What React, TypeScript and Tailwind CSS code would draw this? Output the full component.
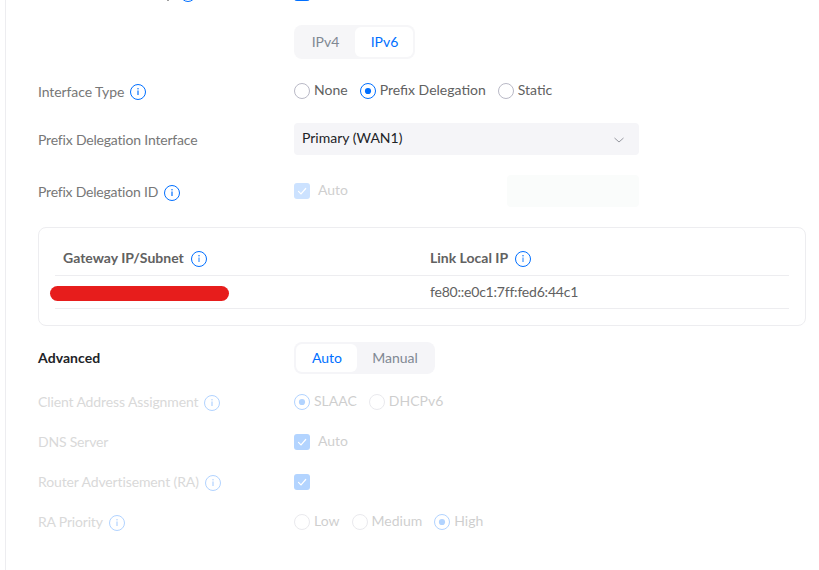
import type { ReactNode } from "react";

function Info({ faded = false, thin = false }: { faded?: boolean; thin?: boolean }) {
  return (
    <svg viewBox="0 0 16 16" fill="none" className={`size-4 shrink-0 ${faded ? "opacity-30" : ""}`}>
      <circle cx="8" cy="8" r="7.5" stroke="#006fff" />
      <path d="M8 6.5V11" stroke="#006fff" strokeWidth={thin ? 0.9 : 1.2} />
      <circle cx="8" cy="4.8" r="0.75" fill="#006fff" />
    </svg>
  );
}

function Row({
  label,
  info = false,
  faded = false,
  className,
  labelClass = "",
  textClass = "",
  children,
}: {
  label: string;
  info?: boolean;
  faded?: boolean;
  className: string;
  labelClass?: string;
  textClass?: string;
  children: ReactNode;
}) {
  return (
    <div className={`flex h-8 shrink-0 items-center ${className}`}>
      <div className={`flex w-[256px] shrink-0 items-center gap-1.5 pt-0.5 ${faded ? "text-[#d9d9d9]" : "text-[#777777]"} ${labelClass}`}>
        <span className={`whitespace-nowrap ${faded ? "-mt-0.5" : ""} ${textClass}`}>{label}</span>
        {info && <Info faded={faded} />}
      </div>
      {children}
    </div>
  );
}

function Radio({ label, on = false, faded = false, className = "" }: { label: string; on?: boolean; faded?: boolean; className?: string }) {
  return (
    <div className={`flex items-center gap-1 ${faded ? "opacity-30" : ""} ${className}`}>
      <svg viewBox="0 0 16 16" fill="none" className="size-4 shrink-0">
        <circle cx="8" cy="8" r="7.5" stroke={on ? "#006fff" : "#b9b9c6"} />
        {on && <circle cx="8" cy="8" r="3.1" fill="#006fff" />}
      </svg>
      <span className="-mt-0.5 whitespace-nowrap text-[#616161]">{label}</span>
    </div>
  );
}

function Check({ className }: { className: string }) {
  return (
    <div className={`flex size-4 shrink-0 items-center justify-center rounded-[3px] ${className}`}>
      <svg viewBox="0 0 16 16" fill="none" className="size-4">
        <path d="M4.5 8.3 7 10.8l4.7-5.3" stroke="#fff" strokeWidth="1.2" strokeLinecap="round" />
      </svg>
    </div>
  );
}

export default function App() {
  return (
    <div className="h-[570px] w-[819px] overflow-hidden bg-white pl-[5px] font-[Lato,sans-serif] text-sm">
      <div className="flex h-full flex-col border-l border-[#ededf0] pl-8">
        <div className="flex h-[3px] shrink-0 items-end overflow-hidden text-[#808080]">
          <div className="flex w-[256px] items-end">
            <div className="mb-[2px] ml-[129px] h-px w-0.5 bg-[#a0a0a0]" />
            <span className="mb-px ml-[11px]"><Info /></span>
          </div>
          <Check className="mb-0.5 bg-[#006fff]" />
        </div>

        <div className="mt-[22px] ml-[256px] flex h-[34px] w-[121px] shrink-0 rounded-lg bg-[#f6f6f8] p-0.5 text-center leading-[30px]">
          <div className="w-[59px] text-[#808893]">IPv4</div>
          <div className="w-[58px] rounded-md bg-white pl-px text-[#006fff]">IPv6</div>
        </div>

        <Row label="Interface Type" info className="mt-4" textClass="tracking-[-0.09px]">
          <Radio label="None" />
          <Radio label="Prefix Delegation" on className="ml-3" />
          <Radio label="Static" className="ml-3" />
        </Row>

        <Row label="Prefix Delegation Interface" className="mt-4" textClass="tracking-[-0.19px]">
          <div className="flex h-8 w-[345px] items-center justify-between rounded bg-[#f5f5f8] pr-3 pl-2 text-[#212327]">
            <span className="-mt-0.5">Primary (WAN1)</span>
            <svg viewBox="0 0 16 16" fill="none" className="mt-px size-4">
              <path d="m3.5 6 4.5 4 4.5-4" stroke="#9698a0" />
            </svg>
          </div>
        </Row>

        <Row label="Prefix Delegation ID" info className="mt-5" labelClass="pt-1" textClass="-mt-0.5 tracking-[-0.21px]">
          <Check className="bg-[#cce2ff]" />
          <span className="-mt-0.5 ml-2 text-[#cfcfcf]">Auto</span>
          <div className="ml-auto mr-[180px] h-8 w-[132px] rounded bg-[#fafcfb]" />
        </Row>

        <div className="mt-5 h-[99px] w-[768px] shrink-0 rounded-lg border border-[#ededf0] pt-4 pr-4 pl-4">
          <div className="flex h-8 items-center border-b border-[#ededf0] pl-2 font-bold text-[#616161]">
            <div className="-mt-px flex w-[367px] items-center gap-[7px]"><span className="-mt-0.5">Gateway IP/Subnet</span><Info thin /></div>
            <div className="-mt-px flex items-center gap-[7px]"><span className="-mt-0.5">Link Local IP</span><Info thin /></div>
          </div>
          <div className="flex h-[33px] items-center border-b border-[#ededf0] text-[#616161]">
            <div className="mt-0.5 -ml-[5px] h-[15px] w-[179px] rounded-full bg-[#e71d1c]" />
            <span className="ml-[201px] tracking-[-0.21px]">fe80::e0c1:7ff:fed6:44c1</span>
          </div>
        </div>

        <div className="mt-4 flex h-8 shrink-0 items-center">
          <div className="w-[256px] font-bold tracking-[0.07px] text-[#212327]">Advanced</div>
          <div className="flex h-8 w-[141px] rounded-lg bg-[#f5f5f8] p-0.5 text-center leading-7">
            <div className="w-[61px] rounded-md bg-white pl-px text-[#006fff]">Auto</div>
            <div className="w-[76px] text-[#808893]">Manual</div>
          </div>
        </div>

        <Row label="Client Address Assignment" info faded className="mt-3" textClass="tracking-[-0.12px]">
          <Radio label="SLAAC" on faded />
          <Radio label="DHCPv6" faded className="ml-3" />
        </Row>
        <Row label="DNS Server" faded className="mt-2" textClass="tracking-[-0.2px]">
          <Check className="bg-[#b3d4ff]" />
          <span className="-mt-0.5 ml-2 text-[#cfcfcf]">Auto</span>
        </Row>
        <Row label="Router Advertisement (RA)" info faded className="mt-2" textClass="tracking-[-0.12px]">
          <Check className="bg-[#b3d4ff]" />
        </Row>
        <Row label="RA Priority" info faded className="mt-2" textClass="tracking-[-0.18px]">
          <Radio label="Low" faded />
          <Radio label="Medium" faded className="ml-3" />
          <Radio label="High" on faded className="ml-3" />
        </Row>
      </div>
    </div>
  );
}
